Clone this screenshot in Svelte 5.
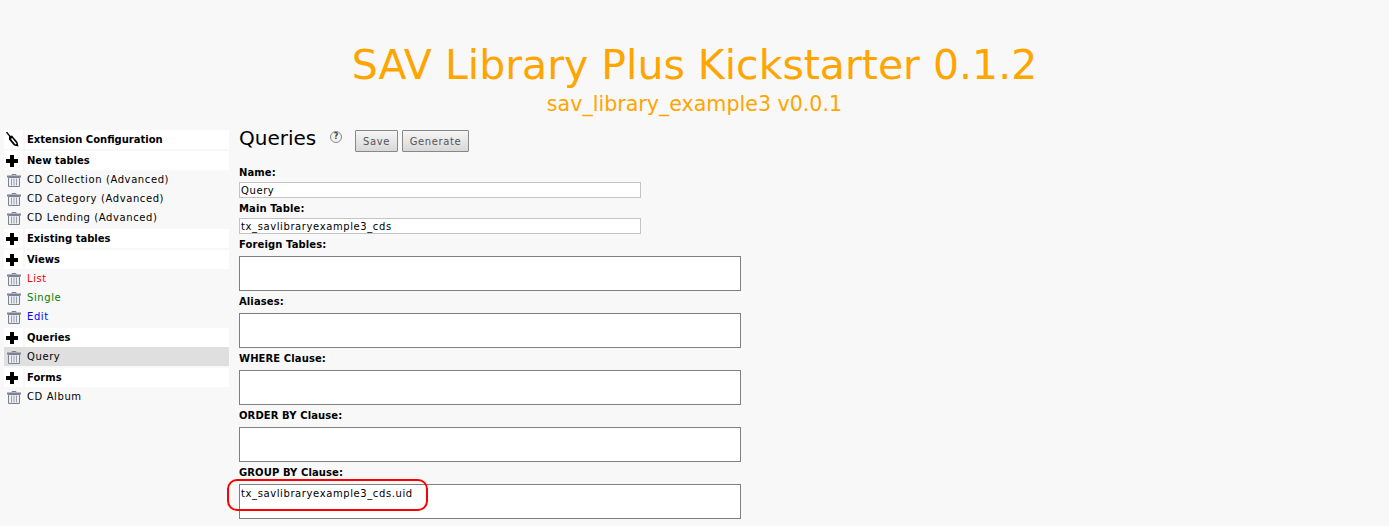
<script>
    const menu = [
        { title: "Extension Configuration", icon: "wand", items: [] },
        {
            title: "New tables",
            items: [
                { name: "CD Collection (Advanced)" },
                { name: "CD Category (Advanced)" },
                { name: "CD Lending (Advanced)" },
            ],
        },
        { title: "Existing tables", items: [] },
        {
            title: "Views",
            items: [
                { name: "List", color: "red" },
                { name: "Single", color: "green" },
                { name: "Edit", color: "blue" },
            ],
        },
        { title: "Queries", items: [{ name: "Query", active: true }] },
        { title: "Forms", items: [{ name: "CD Album" }] },
    ];

    const areas = [
        { label: "Foreign Tables:", value: "" },
        { label: "Aliases:", value: "" },
        { label: "WHERE Clause:", value: "" },
        { label: "ORDER BY Clause:", value: "" },
        { label: "GROUP BY Clause:", value: "tx_savlibraryexample3_cds.uid", marked: true },
    ];
</script>

<header>
    <h1>SAV Library Plus Kickstarter 0.1.2</h1>
    <h2>sav_library_example3 v0.0.1</h2>
</header>

<div class="page">
    <nav>
        {#each menu as section}
            <div class="heading">
                <span class="cell">
                    {#if section.icon === "wand"}
                        <svg width="13" height="15" viewBox="0 0 13 15">
                            <path d="M0.5 0 L4.5 5" stroke="#000" stroke-width="1.3" fill="none" />
                            <path d="M3 4.5 L6 3.5 L11.5 10 L12.5 14.5 L8 13.5 L3 7.5 Z" fill="#000" />
                            <path d="M5.5 6.5 L10 12" stroke="#fff" stroke-width="1.4" fill="none" />
                        </svg>
                    {:else}
                        <svg width="12" height="12" viewBox="0 0 12 12">
                            <path d="M4 0 H8 V4 H12 V8 H8 V12 H4 V8 H0 V4 H4 Z" fill="#000" />
                        </svg>
                    {/if}
                </span>
                <span class="title">{section.title}</span>
            </div>
            {#each section.items as item}
                <div class="item" class:active={item.active}>
                    <span class="cell">
                        <svg width="14" height="13" viewBox="0 0 14 13">
                            <path d="M5 1.5 V0.5 H9 V1.5" stroke="#7b8294" fill="none" />
                            <path d="M0 2.5 H14" stroke="#7b8294" stroke-width="2" fill="none" />
                            <path d="M1.5 3.5 H12.5 V12.5 H1.5 Z" fill="#eceef1" stroke="#7b8294" />
                            <path d="M4.5 4.5 V11.5 M7 4.5 V11.5 M9.5 4.5 V11.5" stroke="#9aa0ae" fill="none" />
                        </svg>
                    </span>
                    <span class="name" style:color={item.color}>{item.name}</span>
                </div>
            {/each}
        {/each}
    </nav>

    <main>
        <div class="toolbar">
            <h3>Queries</h3>
            <span class="help">?</span>
            <button class="save">Save</button>
            <button class="generate">Generate</button>
        </div>

        <label for="name">Name:</label>
        <textarea class="line" id="name" rows="1" value="Query"></textarea>
        <label for="main-table">Main Table:</label>
        <textarea class="line" id="main-table" rows="1" value="tx_savlibraryexample3_cds"></textarea>

        {#each areas as area}
            <div class="area-label">{area.label}</div>
            <div class="area-wrap">
                <textarea value={area.value}></textarea>
                {#if area.marked}
                    <span class="ring"></span>
                {/if}
            </div>
        {/each}
    </main>
</div>

<style>
    :global(body) {
        background: #f8f8f8;
        height: 526px;
        overflow: hidden;
    }
    header {
        text-align: center;
        color: #ffa500;
        font-family: "DejaVu Sans", Verdana, sans-serif;
        padding-top: 41px;
        height: 89px;
    }
    h1 {
        margin: 0;
        font-size: 41px;
        font-weight: normal;
        line-height: 48px;
    }
    h2 {
        margin: 0;
        font-size: 20.6px;
        font-weight: normal;
        line-height: 30px;
    }
    .page {
        display: flex;
        font-family: "DejaVu Sans", Verdana, sans-serif;
        font-size: 10px;
        color: #000;
    }
    nav {
        width: 225px;
        margin-left: 4px;
        flex: none;
    }
    .heading {
        display: flex;
        height: 19px;
        margin-top: 2px;
        gap: 2px;
    }
    .heading:first-child {
        margin-top: 0;
    }
    .heading .cell {
        background: #fff;
    }
    .title {
        flex: 1;
        background: #fff;
        font-weight: bold;
        line-height: 19px;
        padding-left: 2px;
    }
    .item {
        display: flex;
        height: 19px;
        gap: 2px;
    }
    .item.active {
        background: #dfdfdf;
    }
    .cell {
        width: 19px;
        display: flex;
        align-items: center;
        padding-left: 2px;
        box-sizing: border-box;
    }
    .item .cell {
        padding-left: 3px;
        padding-top: 2px;
    }
    .name {
        line-height: 19px;
        padding-left: 2px;
        letter-spacing: 0.6px;
    }
    main {
        margin-left: 10px;
        width: 502px;
    }
    .toolbar {
        display: flex;
        align-items: center;
        height: 22px;
    }
    h3 {
        margin: 0 0 6px;
        font-size: 20px;
        font-weight: normal;
        width: 92px;
        white-space: nowrap;
    }
    .help {
        box-sizing: border-box;
        width: 12px;
        height: 12px;
        border: 1.5px solid #8a8a8a;
        border-radius: 50%;
        background: #f2f2f2;
        font-size: 8px;
        font-weight: bold;
        line-height: 9px;
        text-align: center;
        color: #444;
        margin-left: -1px;
        margin-right: 13px;
        margin-top: -8px;
    }
    button {
        height: 22px;
        padding: 0;
        margin-right: 4px;
        border: 1px solid #888;
        border-radius: 1px;
        background: linear-gradient(#f6f6f6, #d8d8d8);
        font-family: inherit;
        font-size: 10px;
        letter-spacing: 0.6px;
        color: #555;
    }
    .save {
        width: 43px;
    }
    .generate {
        width: 67px;
    }
    label,
    .area-label {
        display: block;
        font-weight: bold;
        line-height: 12px;
        font-size: 10px;
        padding-top: 1px;
        letter-spacing: 0.1px;
    }
    label[for="name"] {
        margin-top: 14px;
    }
    .area-wrap {
        position: relative;
        height: 35px;
        margin-top: 5px;
        margin-bottom: 4px;
    }
    textarea {
        display: block;
        box-sizing: border-box;
        width: 502px;
        height: 35px;
        margin: 0;
        padding: 3px 1px;
        border: 1px solid #808080;
        background: #fff;
        font-family: inherit;
        font-size: 10px;
        letter-spacing: 0.6px;
        resize: none;
        outline: none;
    }
    textarea.line {
        width: 402px;
        height: 16px;
        margin: 3px 0 4px;
        padding: 2px 1px 0;
        border-color: #c4c4c4;
        overflow: hidden;
        white-space: nowrap;
    }
    .ring {
        position: absolute;
        left: -12px;
        top: -5px;
        width: 201px;
        height: 32px;
        box-sizing: border-box;
        border: 2px solid #f00;
        border-radius: 10px;
    }
</style>
